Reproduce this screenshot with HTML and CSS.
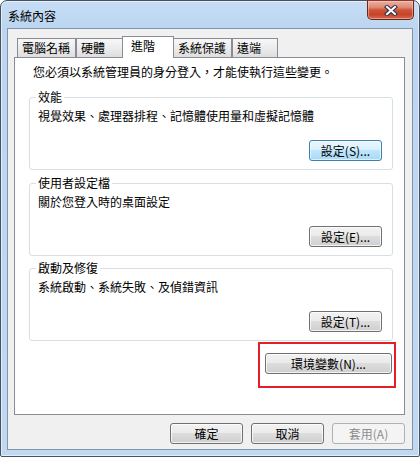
FILE: index.html
```html
<!DOCTYPE html>
<html lang="zh-Hant">
<head>
<meta charset="utf-8">
<title>系統內容</title>
<link rel="stylesheet" href="styles.css">
</head>
<body>
<div class="window">
  <div class="titlebar">
    <span class="title">系統內容</span>
    <button class="close" aria-label="關閉">
      <svg width="14" height="11" viewBox="0 0 14 11">
        <path d="M3 2 L11 9 M11 2 L3 9" stroke="#2b3746" stroke-width="4.2" stroke-linecap="square" fill="none"/>
        <path d="M3 2 L11 9 M11 2 L3 9" stroke="#ffffff" stroke-width="2" stroke-linecap="square" fill="none"/>
      </svg>
    </button>
  </div>
  <div class="client">
    <div class="tabs">
      <div class="tab tab-1">電腦名稱</div>
      <div class="tab tab-2">硬體</div>
      <div class="tab tab-selected">進階</div>
      <div class="tab tab-4">系統保護</div>
      <div class="tab tab-5">遠端</div>
    </div>
    <div class="panel">
      <p class="intro">您必須以系統管理員的身分登入，才能使執行這些變更。</p>
      <fieldset class="group">
        <legend>效能</legend>
        <p class="desc">視覺效果、處理器排程、記憶體使用量和虛擬記憶體</p>
        <div class="actions"><button class="btn btn-default">設定(S)...</button></div>
      </fieldset>
      <fieldset class="group">
        <legend>使用者設定檔</legend>
        <p class="desc">關於您登入時的桌面設定</p>
        <div class="actions"><button class="btn">設定(E)...</button></div>
      </fieldset>
      <fieldset class="group group-last">
        <legend>啟動及修復</legend>
        <p class="desc">系統啟動、系統失敗、及偵錯資訊</p>
        <div class="actions"><button class="btn">設定(T)...</button></div>
      </fieldset>
      <div class="highlight"><button class="btn btn-wide">環境變數(N)...</button></div>
    </div>
    <div class="footer">
      <button class="btn">確定</button>
      <button class="btn">取消</button>
      <button class="btn" disabled>套用(A)</button>
    </div>
  </div>
</div>
</body>
</html>
```

FILE: styles.css
```css
html, body {
  margin: 0;
  padding: 0;
}

body {
  width: 420px;
  height: 457px;
  overflow: hidden;
  background: #ffffff;
  font-family: "Noto Sans CJK TC", "Noto Sans", "Liberation Sans", sans-serif;
  font-size: 12px;
  line-height: 16px;
  color: #000000;
}

.window {
  box-sizing: border-box;
  width: 420px;
  height: 457px;
  border: 1px solid #46525f;
  border-radius: 7px 7px 2px 2px;
  background: linear-gradient(#c6ddf4, #bcd6f1 26px, #bfd9f3);
  box-shadow: inset 0 0 0 1px rgba(255, 255, 255, 0.55);
  display: flex;
  flex-direction: column;
}

.titlebar {
  height: 27px;
  display: flex;
  justify-content: space-between;
  align-items: flex-start;
  padding-left: 7px;
}

.title {
  padding-top: 7px;
  color: #000000;
}

.close {
  box-sizing: border-box;
  width: 47px;
  height: 20px;
  margin: -1px 5px 0 0;
  padding: 0;
  border: 1px solid #6a2519;
  border-top-color: #8a3a2c;
  border-radius: 0 0 5px 5px;
  background: linear-gradient(#ebb0a2, #de8a76 35%, #cf5437 50%, #c7442a 75%, #d56a50);
  box-shadow: inset 0 0 0 1px rgba(255, 220, 210, 0.45);
  display: flex;
  align-items: center;
  justify-content: center;
}

.close svg {
  display: block;
}

.client {
  box-sizing: border-box;
  height: 422px;
  margin: 0 6px;
  border: 1px solid #8495a7;
  background: #f0f0f0;
  padding: 7px 7px 0 6px;
  display: flex;
  flex-direction: column;
}

.tabs {
  display: flex;
  align-items: flex-end;
  height: 21px;
  padding-left: 3px;
  z-index: 1;
}

.tab {
  box-sizing: border-box;
  height: 19px;
  border: 1px solid #898c95;
  border-bottom: 0;
  padding-left: 4px;
  line-height: 17px;
  white-space: nowrap;
  background: linear-gradient(#f7f7f7, #ececec 50%, #dedede);
}

.tab-1 { width: 59px; }
.tab-2 { width: 47px; }
.tab-4 { width: 59px; }
.tab-5 { width: 46px; }

.tab-selected {
  width: 52px;
  height: 22px;
  margin: 0 -1px -1px -1px;
  padding-left: 8px;
  line-height: 18px;
  background: #ffffff;
  z-index: 2;
}

.panel {
  box-sizing: border-box;
  height: 358px;
  border: 1px solid #898c95;
  background: #ffffff;
  padding: 6px 11px 0 14px;
  display: flex;
  flex-direction: column;
}

.intro {
  margin: 0 0 9px 4px;
}

.group {
  margin: 0;
  padding: 3px 10px 8px 8px;
  border: 1px solid #d5dfe5;
  border-radius: 3px;
  min-width: 0;
}

.group + .group {
  margin-top: 5px;
}

.group.group-last {
  margin-top: 4px;
}

.group legend {
  padding: 0 2px;
  margin-left: -2px;
  line-height: 16px;
}

.desc {
  margin: 0;
}

.actions {
  display: flex;
  justify-content: flex-end;
  margin-top: 16px;
}

.btn {
  box-sizing: border-box;
  width: 73px;
  height: 21px;
  margin: 0;
  padding: 0;
  font: inherit;
  line-height: 17px;
  color: #000000;
  border: 1px solid #707070;
  border-radius: 3px;
  background: linear-gradient(#f2f2f2, #ebebeb 45%, #dddddd 50%, #cfcfcf);
  box-shadow: inset 0 0 0 1px rgba(255, 255, 255, 0.75);
}

.btn-default {
  border-color: #3c7fb1;
  background: linear-gradient(#eaf6fd, #d9f0fc 45%, #bee6fd 50%, #a7d9f5);
  box-shadow: inset 0 0 0 1px rgba(255, 255, 255, 0.6);
}

.btn:disabled {
  color: #8d8d8d;
  border-color: #adb2b5;
  background: #f4f4f4;
  box-shadow: none;
}

.btn-wide {
  width: 127px;
}

.highlight {
  box-sizing: border-box;
  align-self: flex-end;
  width: 138px;
  height: 46px;
  margin: 1px -3px 0 0;
  border: 2px solid #e61e27;
  padding: 9px 0 0 5px;
}

.footer {
  display: flex;
  justify-content: flex-end;
  gap: 8px;
  margin-top: 8px;
}
```
